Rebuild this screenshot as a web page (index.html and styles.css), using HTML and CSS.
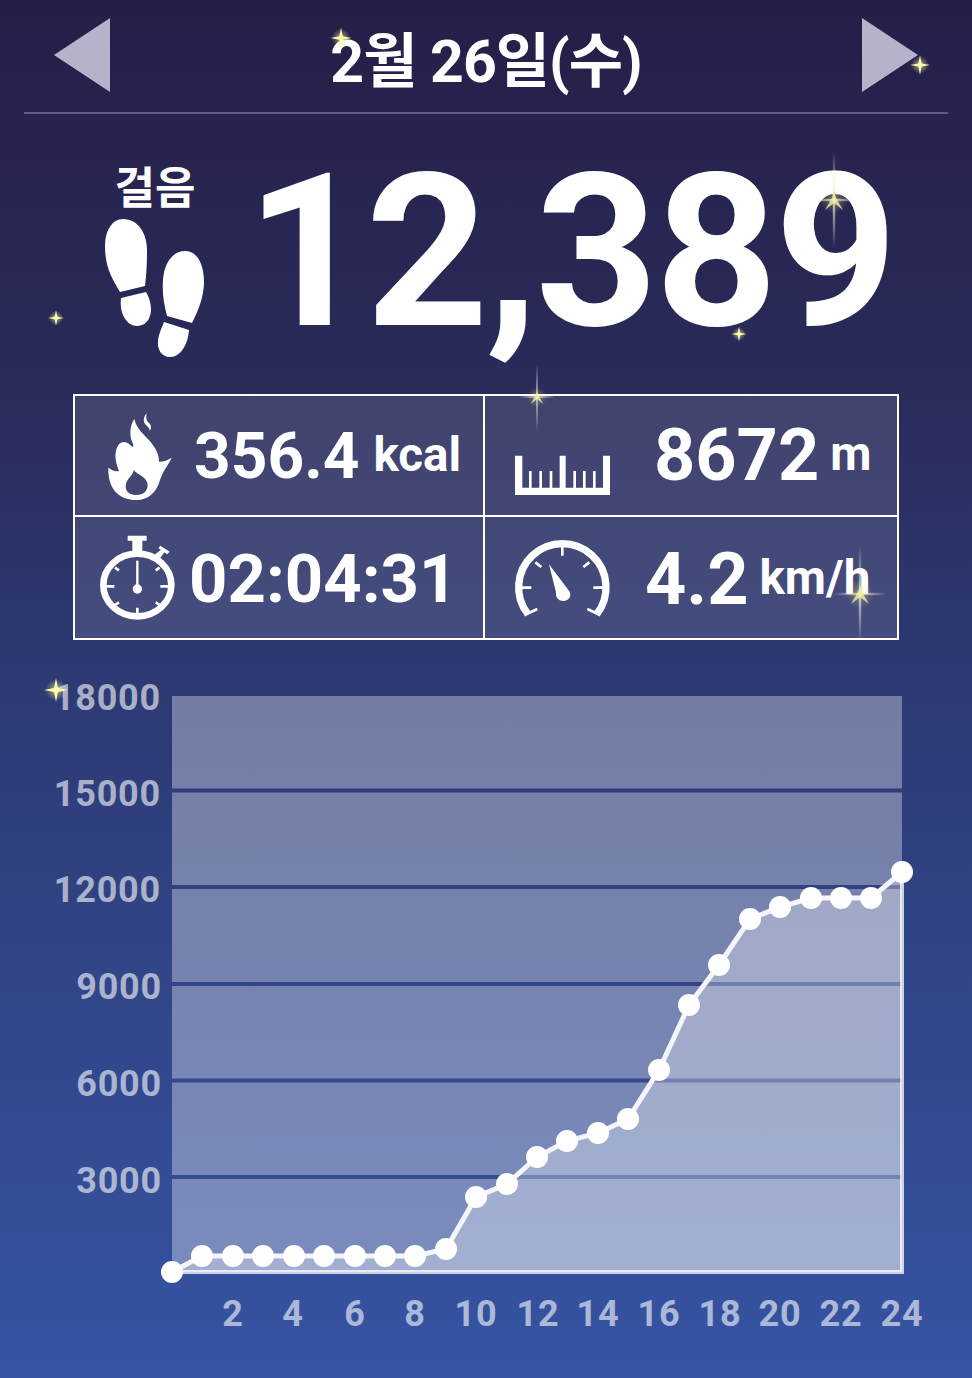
FILE: index.html
```html
<!DOCTYPE html>
<html lang="ko">
<head>
<meta charset="utf-8">
<title>걸음</title>
<link rel="stylesheet" href="styles.css">
</head>
<body>
<main class="page">
  <header class="top">
    <svg class="arrow" viewBox="0 0 56 74"><path d="M56 0V74L0 37Z"/></svg>
    <h1 class="date">2월 26일(수)</h1>
    <svg class="arrow" viewBox="0 0 56 74"><path d="M0 0V74L56 37Z"/></svg>
  </header>

  <section class="hero">
    <div class="steps">
      <div class="steps-label">걸음</div>
      <svg class="feet" viewBox="105 220 100 140">
        <path d="M123 220C138 220 147 234 147 252C147 268 146 278 145 287L120 293C112 280 105 268 105 247C105 232 112 220 123 220Z"/>
        <path d="M121 299L146 293C150 300 151 306 151 312C150 322 144 327 137 327C127 327 119 315 121 299Z"/>
        <path d="M185 252C197 252 204 265 204 283C204 298 198 312 192 324L167 317C164 305 162 295 163 281C164 264 173 252 185 252Z"/>
        <path d="M164 323L189 331C188 345 181 358 170 358C161 358 157 350 158 341C159 334 162 328 164 323Z"/>
      </svg>
    </div>
    <div class="count">12,389</div>
  </section>

  <section class="stats">
    <div class="cell cell-kcal">
      <svg class="icon-flame" viewBox="0 0 270 315">
        <path fill-rule="evenodd" d="M40 188C52 197 62 200 72 198C58 165 58 135 72 118C82 108 95 108 108 122C115 128 118 125 112 112C102 90 105 60 118 42C125 75 150 90 170 115C185 135 192 150 192 170C205 170 220 165 230 158C220 180 205 195 195 225C185 262 160 285 125 285C70 285 38 250 40 188ZM115 195C118 210 92 220 92 245C92 262 108 270 125 270C145 270 158 258 158 240C158 218 130 210 115 195Z"/>
        <path d="M155 25C142 40 145 55 155 62C160 66 163 70 165 78C172 62 165 55 158 50C153 44 153 35 155 25Z"/>
      </svg>
      <span class="value value-a">356.4</span><span class="unit">kcal</span>
    </div>
    <div class="cell cell-dist">
      <svg class="icon-ruler" viewBox="0 0 345 180">
        <path d="M30 32H52V128H72V78H80V128H103V78H111V128H134V78H142V128H164V32H182V128H205V78H213V128H234V78H242V128H264V78H272V128H294V32H315V150H30Z"/>
      </svg>
      <span class="value value-b">8672</span><span class="unit unit-tight">m</span>
    </div>
    <div class="cell cell-time">
      <svg class="icon-watch" viewBox="0 0 255 300">
        <path d="M98 20H155V35H142V70H112V35H98Z"/>
        <path d="M178 78L198 62L190 58L196 50L224 68L216 76L208 70L192 92Z"/>
        <ellipse class="ring" cx="127" cy="168" rx="102" ry="94"/>
        <path class="tick" d="M32 172H58M196 172H222M127 236V258M60 116L72 124M194 116L182 124M60 228L72 220M194 228L182 220"/>
        <path d="M123.500 95H130.500V170H123.500Z"/>
        <circle cx="127" cy="180" r="14"/>
      </svg>
      <span class="value value-c">02:04:31</span>
    </div>
    <div class="cell cell-speed">
      <svg class="icon-gauge" viewBox="0 0 324 264">
        <path class="dial" d="M60 238A131 131 0 1 1 266 238"/>
        <path class="dial-tick" d="M163 36V62M40 158H70M286 158H256M82 82L100 96M244 82L226 96M50 240L88 222M276 240L238 222"/>
        <path d="M123 88L185 170C192 185 180 198 165 198C150 198 142 185 144 172Z"/>
      </svg>
      <span class="value value-b">4.2</span><span class="unit unit-tight">km/h</span>
    </div>
  </section>

  <svg class="chart" viewBox="0 640 972 738">
    <g class="plot">
      <rect x="172" y="696" width="730" height="92.5"/>
      <rect x="172" y="792.5" width="730" height="92.5"/>
      <rect x="172" y="889" width="730" height="93"/>
      <rect x="172" y="986" width="730" height="92.5"/>
      <rect x="172" y="1082.5" width="730" height="92.5"/>
      <rect x="172" y="1179" width="730" height="93"/>
    </g>
    <path class="area" d="M172 1272L202 1256L415 1256L446 1249L476 1197L507 1184L537 1157L567 1141L598 1133L628 1119L659 1070L689 1005L719 965L750 919L780 907L811 898L871 898L902 872V1272Z"/>
    <path class="edge" d="M902 872V1272H172"/>
    <polyline class="line" points="172,1272 202,1256 233,1256 263,1256 294,1256 324,1256 355,1256 385,1256 415,1256 446,1249 476,1197 507,1184 537,1157 567,1141 598,1133 628,1119 659,1070 689,1005 719,965 750,919 780,907 811,898 841,898 871,898 902,872"/>
    <g class="dots">
      <circle cx="172" cy="1272" r="11"/><circle cx="202" cy="1256" r="11"/><circle cx="233" cy="1256" r="11"/><circle cx="263" cy="1256" r="11"/><circle cx="294" cy="1256" r="11"/><circle cx="324" cy="1256" r="11"/><circle cx="355" cy="1256" r="11"/><circle cx="385" cy="1256" r="11"/><circle cx="415" cy="1256" r="11"/><circle cx="446" cy="1249" r="11"/><circle cx="476" cy="1197" r="11"/><circle cx="507" cy="1184" r="11"/><circle cx="537" cy="1157" r="11"/><circle cx="567" cy="1141" r="11"/><circle cx="598" cy="1133" r="11"/><circle cx="628" cy="1119" r="11"/><circle cx="659" cy="1070" r="11"/><circle cx="689" cy="1005" r="11"/><circle cx="719" cy="965" r="11"/><circle cx="750" cy="919" r="11"/><circle cx="780" cy="907" r="11"/><circle cx="811" cy="898" r="11"/><circle cx="841" cy="898" r="11"/><circle cx="871" cy="898" r="11"/><circle cx="902" cy="872" r="11"/>
    </g>
    <g class="axis-y">
      <text x="161" y="710">18000</text>
      <text x="161" y="806">15000</text>
      <text x="161" y="902">12000</text>
      <text x="162" y="999">9000</text>
      <text x="162" y="1096">6000</text>
      <text x="162" y="1193">3000</text>
    </g>
    <g class="axis-x">
      <text x="233" y="1326">2</text><text x="293" y="1326">4</text><text x="355" y="1326">6</text><text x="415" y="1326">8</text><text x="476" y="1326">10</text><text x="538" y="1326">12</text><text x="598" y="1326">14</text><text x="659" y="1326">16</text><text x="720" y="1326">18</text><text x="780" y="1326">20</text><text x="841" y="1326">22</text><text x="902" y="1326">24</text>
    </g>
  </svg>

  <svg class="sparkles" viewBox="0 0 972 1378">
    <defs>
      <radialGradient id="glow">
        <stop offset="0" stop-color="#fffcb4" stop-opacity=".95"/>
        <stop offset=".45" stop-color="#f6f29c" stop-opacity=".35"/>
        <stop offset="1" stop-color="#f6f29c" stop-opacity="0"/>
      </radialGradient>
      <linearGradient id="beam-v" x1="0" y1="0" x2="0" y2="1">
        <stop offset="0" stop-color="#fff" stop-opacity="0"/>
        <stop offset=".5" stop-color="#e8e6c0" stop-opacity=".8"/>
        <stop offset="1" stop-color="#fff" stop-opacity="0"/>
      </linearGradient>
      <linearGradient id="beam-h" x1="0" y1="0" x2="1" y2="0">
        <stop offset="0" stop-color="#fff" stop-opacity="0"/>
        <stop offset=".5" stop-color="#e8e6c0" stop-opacity=".8"/>
        <stop offset="1" stop-color="#fff" stop-opacity="0"/>
      </linearGradient>
      <g id="twinkle">
        <circle r="9" fill="url(#glow)"/>
        <path fill="#fdfaa8" d="M0 -10L1.600 -1.600L10 0L1.600 1.600L0 10L-1.600 1.600L-10 0L-1.600 -1.600Z"/>
      </g>
      <g id="flare">
        <rect x="-1.200" y="-48" width="2.400" height="96" fill="url(#beam-v)"/>
        <rect x="-26" y="-1.200" width="52" height="2.400" fill="url(#beam-h)"/>
        <circle r="14" fill="url(#glow)" opacity=".55"/>
        <path fill="#f4f0a0" opacity=".8" d="M0 -9L2 -2L9 10L0 3L-9 10L-2 -2Z"/>
      </g>
    </defs>
    <use href="#twinkle" transform="translate(341 38) scale(1.050)"/>
    <use href="#twinkle" transform="translate(920 65)"/>
    <use href="#twinkle" transform="translate(56 318) scale(.8)"/>
    <use href="#twinkle" transform="translate(739 334) scale(.75)"/>
    <use href="#twinkle" transform="translate(56 690) scale(1.200)"/>
    <use href="#flare" transform="translate(834 200)"/>
    <use href="#flare" transform="translate(537 397) scale(.7)"/>
    <use href="#flare" transform="translate(860 594)"/>
  </svg>
</main>
</body>
</html>
```
FILE: styles.css
```css
* { box-sizing: border-box; margin: 0; padding: 0; }

html, body { width: 972px; height: 1378px; overflow: hidden; }

body {
  font-family: Roboto, "Noto Sans CJK KR", sans-serif;
  font-weight: 700;
  color: #fff;
  background: linear-gradient(180deg, #251f48 0%, #2a2b5a 28%, #2d3a74 50%, #3654a3 100%);
}

.page { position: relative; width: 972px; height: 1378px; }

/* header */
.top {
  display: flex;
  align-items: center;
  justify-content: space-between;
  height: 114px;
  margin: 0 24px;
  padding: 0 30px 3px;
  border-bottom: 2px solid #5e5b86;
}
.arrow { width: 56px; height: 74px; fill: #b4b3c9; }
.date {
  font-size: 59px;
  line-height: 1;
  font-weight: 700;
  letter-spacing: -1px;
  padding-top: 14px;
}

/* hero */
.hero {
  display: flex;
  align-items: flex-start;
  height: 280px;
  padding-left: 105px;
}
.steps {
  display: flex;
  flex-direction: column;
  align-items: center;
  width: 100px;
  padding-top: 52px;
}
.steps-label { font-size: 44px; line-height: 46px; }
.feet { width: 100px; height: 140px; margin-top: 7px; fill: #fff; }
.count {
  margin-left: 41px;
  font-size: 214px;
  line-height: 1;
  letter-spacing: -3px;
  padding-top: 31px;
}

/* stat grid */
.stats {
  display: grid;
  grid-template-columns: 410px 414px;
  grid-template-rows: 121px 123px;
  margin-left: 73px;
  width: 826px;
  height: 246px;
  border-top: 2px solid #fff;
  border-left: 2px solid #fff;
}
.cell {
  display: flex;
  align-items: center;
  white-space: nowrap;
  line-height: 1;
  background: rgba(255, 255, 255, .11);
  border-right: 2px solid #fff;
  border-bottom: 2px solid #fff;
}
.cell-kcal, .cell-dist { padding-left: 20px; }
.cell-time { padding: 4px 0 0 20px; }
.cell-speed { padding: 4px 0 0 23px; }

.icon-flame { width: 90px; height: 105px; margin: 3px 9px 0 0; fill: #fff; }
.icon-ruler { width: 115px; height: 60px; margin: 38px 34px 0 0; fill: #fff; }
.icon-watch { width: 85px; height: 100px; margin: -2px 9px 0 0; fill: #fff; }
.icon-gauge { width: 108px; height: 88px; margin: -1px 29px 0 0; fill: #fff; }

.ring { fill: none; stroke: #fff; stroke-width: 20; }
.tick { fill: none; stroke: #fff; stroke-width: 8; }
.dial { fill: none; stroke: #fff; stroke-width: 22; }
.dial-tick { fill: none; stroke: #fff; stroke-width: 8; }

.value-a { font-size: 64px; margin-top: 2px; }
.value-b { font-size: 72px; }
.value-c { font-size: 67px; }
.unit { font-size: 47.500px; margin-left: 14px; }
.unit-tight { margin: 0 0 2px 11px; }

/* chart */
.chart { display: block; width: 972px; height: 738px; }
.plot rect { fill: #fff; fill-opacity: .34; }
.area { fill: #fff; fill-opacity: .31; }
.edge { fill: none; stroke: #fff; stroke-opacity: .75; stroke-width: 4; }
.line { fill: none; stroke: #f4f5fa; stroke-width: 5; }
.dots circle { fill: #fff; }
.axis-y text, .axis-x text {
  font-size: 36px;
  font-weight: 700;
  fill: #fff;
  fill-opacity: .6;
  letter-spacing: .8px;
}
.axis-y text { text-anchor: end; }
.axis-x text { text-anchor: middle; }

/* decorative layer */
.sparkles {
  position: absolute;
  inset: 0;
  width: 972px;
  height: 1378px;
  pointer-events: none;
}
```
